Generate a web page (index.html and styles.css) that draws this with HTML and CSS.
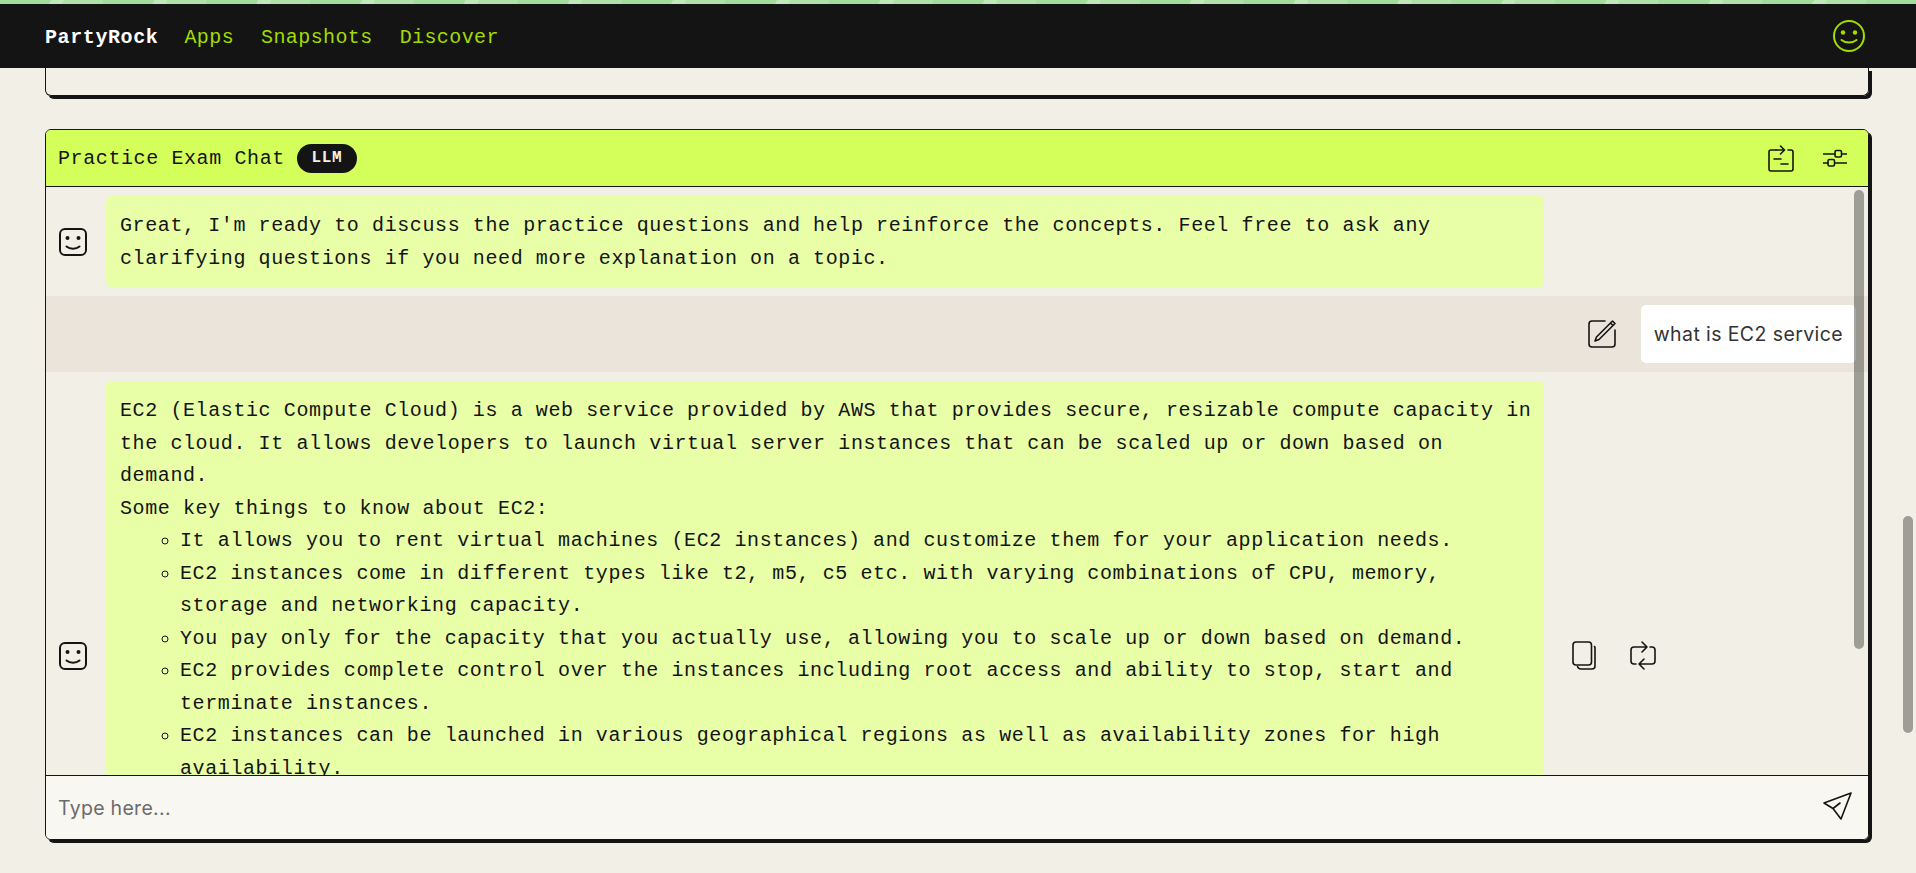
FILE: index.html
```html
<!DOCTYPE html>
<html lang="en">
<head>
  <meta charset="UTF-8">
  <meta name="viewport" content="width=device-width, initial-scale=1.0">
  <title>PartyRock</title>
  <link rel="stylesheet" href="styles.css">
</head>
<body>

<div class="strip"></div>

<nav class="topnav">
  <a class="logo">PartyRock</a>
  <a class="navlink">Apps</a>
  <a class="navlink">Snapshots</a>
  <a class="navlink">Discover</a>
  <svg class="profile" viewBox="0 0 32 32" fill="none" stroke="currentColor" stroke-width="2" stroke-linecap="round">
    <circle cx="16" cy="16" r="15"/>
    <circle cx="10" cy="12.500" r="2.200" fill="currentColor" stroke="none"/>
    <circle cx="22" cy="12.500" r="2.200" fill="currentColor" stroke="none"/>
    <path d="M8.500 20c4 3.400 11 3.400 15 0"/>
  </svg>
</nav>

<main class="page">
  <div class="card-stub"></div>

  <section class="card">
    <header class="card-head">
      <span class="card-title">Practice Exam Chat</span>
      <span class="badge">LLM</span>
      <svg class="icon head-swap" viewBox="0 0 26 27">
        <path d="M8 5H3a2 2 0 0 0-2 2v17a2 2 0 0 0 2 2h20a2 2 0 0 0 2-2V7a2 2 0 0 0-2-2h-3"/>
        <path d="M8 5h8M12.500 1l4 4-4 4"/>
        <path d="M6 14h7M13 19h7"/>
      </svg>
      <svg class="icon head-sliders" viewBox="0 0 24 18">
        <path d="M0 5h12M19 5h5M0 14h5M12 14h12"/>
        <rect x="12" y="1.500" width="6.500" height="6.500" rx="1.500"/>
        <rect x="5" y="10.500" width="6.500" height="6.500" rx="1.500"/>
      </svg>
    </header>

    <div class="messages">
      <div class="row">
        <div class="avatar">
          <svg class="icon face" viewBox="0 0 28 28">
            <rect x="1" y="1" width="26" height="26" rx="5"/>
            <circle cx="8.500" cy="10" r="2" class="dot"/>
            <circle cx="19.500" cy="10" r="2" class="dot"/>
            <path d="M7.500 18.500c3.500 3 9.500 3 13 0"/>
          </svg>
        </div>
        <div class="bubble">Great, I'm ready to discuss the practice questions and help reinforce the concepts. Feel free to ask any clarifying questions if you need more explanation on a topic.</div>
      </div>

      <div class="row row-user">
        <svg class="icon edit" viewBox="0 0 28 28">
          <path d="M17 1H4a3 3 0 0 0-3 3v20a3 3 0 0 0 3 3h20a3 3 0 0 0 3-3V10"/>
          <path d="M24.500 1l2.500 2.500L11 19.500l-4 1.500 1.500-4zM22.500 3l2.500 2.500"/>
        </svg>
        <div class="user-bubble">what is EC2 service</div>
      </div>

      <div class="row">
        <div class="avatar">
          <svg class="icon face" viewBox="0 0 28 28">
            <rect x="1" y="1" width="26" height="26" rx="5"/>
            <circle cx="8.500" cy="10" r="2" class="dot"/>
            <circle cx="19.500" cy="10" r="2" class="dot"/>
            <path d="M7.500 18.500c3.500 3 9.500 3 13 0"/>
          </svg>
        </div>
        <div class="bubble">
          EC2 (Elastic Compute Cloud) is a web service provided by AWS that provides secure, resizable compute capacity in the cloud. It allows developers to launch virtual server instances that can be scaled up or down based on demand.<br>
          Some key things to know about EC2:
          <ul>
            <li>It allows you to rent virtual machines (EC2 instances) and customize them for your application needs.</li>
            <li>EC2 instances come in different types like t2, m5, c5 etc. with varying combinations of CPU, memory, storage and networking capacity.</li>
            <li>You pay only for the capacity that you actually use, allowing you to scale up or down based on demand.</li>
            <li>EC2 provides complete control over the instances including root access and ability to stop, start and terminate instances.</li>
            <li>EC2 instances can be launched in various geographical regions as well as availability zones for high availability.</li>
            <li>EC2 integrates with other AWS services like S3, EBS and VPC.</li>
          </ul>
          Let me know if you have any other questions.<br>
          Happy to go through more practice questions.<br>
          Shall we continue?
        </div>
        <div class="actions">
          <svg class="icon copy" viewBox="0 0 24 29">
            <rect x="1" y="1" width="18.500" height="23" rx="3"/>
            <path d="M22.500 5.500c.3.500.5 1 .5 1.500v18a3 3 0 0 1-3 3H9c-1.500 0-3-1-3.500-2.500"/>
          </svg>
          <svg class="icon repeat" viewBox="0 0 26 29">
            <path d="M9 6H4a3 3 0 0 0-3 3v11a3 3 0 0 0 3 3h2M9 6h8M12 1l5 5-5 5"/>
            <path d="M17 23h5a3 3 0 0 0 3-3V9a3 3 0 0 0-3-3h-2M17 23H9M14 18l-5 5 5 5"/>
          </svg>
        </div>
      </div>

      <div class="inner-thumb"></div>
    </div>

    <footer class="composer">
      <span class="placeholder">Type here...</span>
      <svg class="icon send" viewBox="0 0 29 28">
        <path d="M28 1L1 11l9 5.500L18 27zM10 16.500L17 11"/>
      </svg>
    </footer>
  </section>

  <div class="page-thumb"></div>
</main>

</body>
</html>
```

FILE: styles.css
```css
body {
  margin: 0;
  height: 873px;
  overflow: hidden;
  display: flex;
  flex-direction: column;
  background-color: #f2f0e6;
  color: #141414;
  font-family: "Liberation Mono", monospace;
  font-size: 20px;
  letter-spacing: 0.6px;
}
.strip {
  height: 4px;
  background: repeating-linear-gradient(115deg, #a4dca0 0, #a4dca0 46px, #c0e8ba 46px, #c0e8ba 58px, #afe1a9 58px, #afe1a9 94px);
}
.topnav {
  height: 64px;
  flex-shrink: 0;
  display: flex;
  align-items: center;
  padding: 0 51px 0 45px;
  background-color: #141414;
  color: #a2dc00;
}
.logo {
  margin-right: 26px;
  padding-top: 2px;
  color: #fff;
  font-weight: bold;
}
.navlink {
  margin-right: 27px;
  padding-top: 2px;
  letter-spacing: 0.4px;
}
.profile {
  width: 32px;
  height: 32px;
  margin-left: auto;
}

/* page content */
.page {
  position: relative;
  flex: 1;
  overflow: hidden;
  padding: 0 47px 0 45px;
}
.card-stub {
  height: 27px;
  margin-bottom: 33px;
  border: 1px solid #141414;
  border-top: none;
  border-radius: 0 0 6px 6px;
  box-shadow: 3px 3px 0 #141414;
}
.card {
  height: 709px;
  display: flex;
  flex-direction: column;
  border: 1px solid #141414;
  border-radius: 6px;
  box-shadow: 3px 3px 0 #141414;
  overflow: hidden;
}
.card-head {
  height: 56px;
  flex-shrink: 0;
  display: flex;
  align-items: center;
  padding-left: 12px;
  background-color: #d4ff5a;
  border-bottom: 1px solid #141414;
}
.card-title {
  margin-right: 12px;
}
.badge {
  width: 60px;
  height: 29px;
  line-height: 29px;
  text-align: center;
  border-radius: 15px;
  background-color: #141414;
  color: #f2f0e6;
  font-size: 16px;
  font-weight: bold;
  letter-spacing: 0.6px;
}
.icon {
  flex-shrink: 0;
  fill: none;
  stroke: #141414;
  stroke-width: 1.6;
  stroke-linecap: round;
  stroke-linejoin: round;
}
.icon .dot {
  fill: #141414;
  stroke: none;
}
.head-swap {
  width: 26px;
  height: 27px;
  margin-left: auto;
}
.head-sliders {
  width: 24px;
  height: 18px;
  margin: 0 21px 0 29px;
}

/* chat messages */
.messages {
  position: relative;
  flex: 1;
  min-height: 0;
  overflow: hidden;
}
.row {
  display: flex;
  align-items: center;
  padding: 9px 0;
}
.avatar {
  width: 54px;
  padding-right: 6px;
  flex-shrink: 0;
  display: flex;
  justify-content: center;
}
.face {
  width: 28px;
  height: 28px;
  stroke-width: 2;
}
.bubble {
  width: 1412px;
  flex-shrink: 0;
  padding: 14px 12px 12px 14px;
  border-radius: 5px;
  background-color: #e8ffa8;
  line-height: 32.5px;
}
.bubble ul {
  margin: 0 0 3px;
  padding-left: 60px;
  list-style-type: circle;
}
.actions {
  display: flex;
  gap: 34px;
  margin-left: 28px;
}
.copy {
  width: 24px;
  height: 29px;
}
.repeat {
  width: 26px;
  height: 29px;
}
.row-user {
  justify-content: flex-end;
  gap: 25px;
  padding-right: 12px;
  background-color: #ebe4da;
}
.edit {
  width: 28px;
  height: 28px;
}
.user-bubble {
  padding: 0 13px;
  height: 58px;
  line-height: 58px;
  border-radius: 5px;
  background-color: #fff;
  font-family: Inter, sans-serif;
  font-size: 19.500px;
  letter-spacing: 0.4px;
  color: #333;
}
.inner-thumb {
  position: absolute;
  top: 3px;
  right: 4px;
  width: 10px;
  height: 459px;
  border-radius: 5px;
  background-color: rgba(20, 20, 20, 0.38);
}

/* input bar */
.composer {
  height: 63px;
  flex-shrink: 0;
  display: flex;
  align-items: center;
  justify-content: space-between;
  padding: 0 16px 0 12px;
  background-color: #f9f7f2;
  border-top: 1px solid #141414;
}
.placeholder {
  font-family: Inter, sans-serif;
  font-size: 19.500px;
  letter-spacing: 0.3px;
  color: #6b6b6b;
}
.send {
  width: 29px;
  height: 28px;
  margin-bottom: 3px;
}
.page-thumb {
  position: absolute;
  top: 448px;
  right: 3px;
  width: 10px;
  height: 217px;
  border-radius: 5px;
  background-color: rgba(20, 20, 20, 0.38);
}
```
